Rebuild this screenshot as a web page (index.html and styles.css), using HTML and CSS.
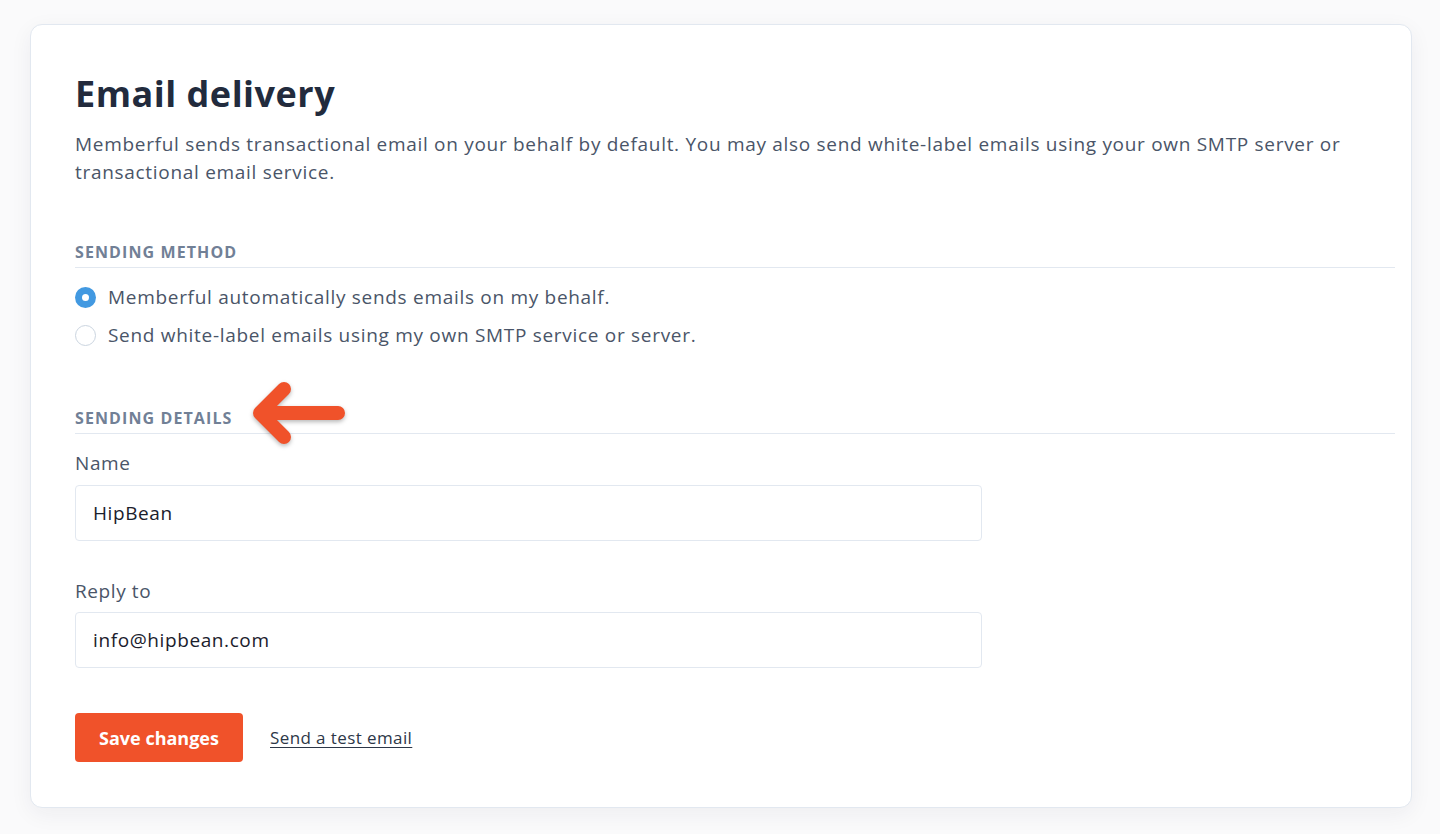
FILE: index.html
```html
<!DOCTYPE html>
<html lang="en">
<head>
<meta charset="utf-8">
<title>Email delivery</title>
<link rel="stylesheet" href="styles.css">
</head>
<body>
<main class="card">
  <h1 class="title">Email delivery</h1>
  <p class="desc">Memberful sends transactional email on your behalf by default. You may also send white-label emails using your own SMTP server or transactional email service.</p>

  <section class="section method">
    <h2 class="section-label">Sending method</h2>
    <div class="radios">
      <label class="radio-row"><span class="radio checked"></span><span>Memberful automatically sends emails on my behalf.</span></label>
      <label class="radio-row"><span class="radio"></span><span>Send white-label emails using my own SMTP service or server.</span></label>
    </div>
  </section>

  <section class="section details">
    <h2 class="section-label">Sending details</h2>
    <svg class="arrow" width="110" height="85" viewBox="0 0 110 85" aria-hidden="true">
      <path d="M93 40 H15 M39 16 L15 40 L39 64" fill="none" stroke="#f0522a" stroke-width="14" stroke-linecap="round" stroke-linejoin="round"/>
    </svg>
    <div class="field">
      <div class="field-label">Name</div>
      <div class="input">HipBean</div>
    </div>
    <div class="field second">
      <div class="field-label">Reply to</div>
      <div class="input">info@hipbean.com</div>
    </div>
    <div class="actions">
      <button class="btn">Save changes</button>
      <a class="link" href="#">Send a test email</a>
    </div>
  </section>
</main>
</body>
</html>
```

FILE: styles.css
```css
* { box-sizing: border-box; }
html, body { margin: 0; padding: 0; }
body {
  background: #fafafb;
  font-family: "Open Sans", "Liberation Sans", sans-serif;
  color: #4a5568;
  width: 1440px;
  height: 834px;
  overflow: hidden;
  padding-top: 24px;
}
.card {
  margin-left: 30px;
  width: 1382px;
  background: #fff;
  border: 1px solid #e2e8f0;
  border-radius: 12px;
  padding: 47px 16px 45px 44px;
  box-shadow: 0 6px 22px rgba(30, 40, 60, 0.06);
}
.title {
  margin: 0;
  font-size: 36px;
  line-height: 44px;
  font-weight: 700;
  color: #222b3d;
  letter-spacing: 0.5px;
}
.desc {
  margin: 14px 0 0;
  font-size: 19px;
  letter-spacing: 0.7px;
  line-height: 28px;
  color: #4a5568;
}
.section { position: relative; }
.section-label {
  margin: 0;
  font-size: 16px;
  line-height: 20px;
  font-weight: 700;
  text-transform: uppercase;
  letter-spacing: 1.1px;
  color: #718096;
  padding-bottom: 5px;
  border-bottom: 1px solid #e2e8f0;
}
.method { margin-top: 56px; }
.radios { margin-top: 10px; }
.radio-row {
  display: flex;
  align-items: center;
  gap: 12px;
  height: 38px;
  font-size: 19px;
  letter-spacing: 0.7px;
  color: #4a5568;
}
.radio {
  width: 21px;
  height: 21px;
  border-radius: 50%;
  border: 1.5px solid #cbd5e0;
  background: #fff;
  flex: none;
  position: relative;
}
.radio.checked {
  border: none;
  background: #4299e1;
}
.radio.checked::after {
  content: "";
  position: absolute;
  left: 7px;
  top: 7px;
  width: 7px;
  height: 7px;
  border-radius: 50%;
  background: #fff;
}
.details { margin-top: 54px; }
.arrow {
  position: absolute;
  left: 170px;
  top: -35px;
  filter: drop-shadow(0 2px 2px rgba(0, 0, 0, 0.28));
}
.field { margin-top: 16px; }
.field.second { margin-top: 37px; }
.field-label {
  font-size: 19px;
  letter-spacing: 0.6px;
  line-height: 26px;
  color: #4a5568;
}
.input {
  margin-top: 9px;
  width: 907px;
  height: 56px;
  border: 1px solid #e2e8f0;
  border-radius: 4px;
  padding: 0 17px;
  display: flex;
  align-items: center;
  font-size: 19px;
  letter-spacing: 0.6px;
  color: #1a202c;
}
.field.second .input { margin-top: 8px; }
.actions {
  margin-top: 45px;
  display: flex;
  align-items: center;
  gap: 27px;
}
.btn {
  height: 49px;
  width: 168px;
  border: none;
  border-radius: 4px;
  background: #f0522a;
  color: #fff;
  font-family: inherit;
  font-size: 18px;
  font-weight: 700;
  padding: 0;
}
.link {
  font-size: 17px;
  letter-spacing: 0.4px;
  color: #2d3748;
  text-decoration: underline;
  text-underline-offset: 3px;
}
```
